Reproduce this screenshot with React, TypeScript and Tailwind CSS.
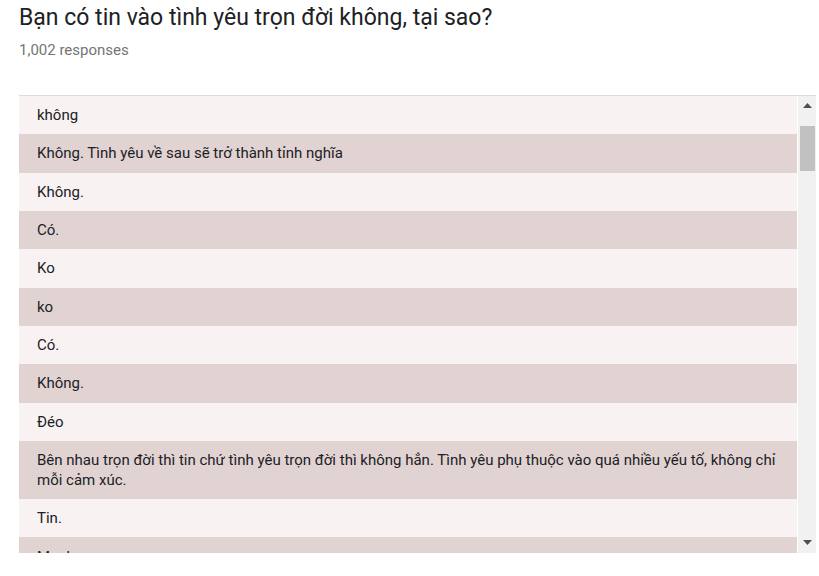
import React from "react";

const rows: string[] = [
  "không",
  "Không. Tình yêu về sau sẽ trở thành tỉnh nghĩa",
  "Không.",
  "Có.",
  "Ko",
  "ko",
  "Có.",
  "Không.",
  "Đéo",
  "Bên nhau trọn đời thì tin chứ tình yêu trọn đời thì không hẳn. Tình yêu phụ thuộc vào quá nhiều yếu tố, không chỉ mỗi cảm xúc.",
  "Tin.",
  "Mạnh",
];

export default function App() {
  return (
    <div
      className="w-[819px] h-[576px] bg-white overflow-hidden"
      style={{ fontFamily: "Roboto, 'Noto Sans', Arial, sans-serif" }}
    >
      <div className="pl-[19px] pt-[4px]">
        <h1 className="text-[23px] leading-[28px] text-[#202124] font-normal">
          Bạn có tin vào tình yêu trọn đời không, tại sao?
        </h1>
        <div className="mt-[8px] text-[15px] leading-[20px] text-[#757575]">
          1,002 responses
        </div>
        <div className="mt-[35px] w-[797px] h-[458px] flex border-t border-[#e0dada]">
          <div className="w-[778px] overflow-hidden">
            {rows.map((r, i) => (
              <div
                key={i}
                className={
                  (i % 2 === 0 ? "bg-[#f8f2f2]" : "bg-[#e2d3d3]") +
                  " pl-[18px] pr-[20px] py-[9.17px] text-[15px] leading-[20px] text-[#202124]"
                }
              >
                {r}
              </div>
            ))}
          </div>
          <div className="ml-[1px] w-[18px] bg-[#f1f1f1] flex flex-col">
            <div className="h-[17px] flex items-center justify-center">
              <svg width="9" height="5" viewBox="0 0 9 5" className="mt-[2px]">
                <polygon points="4.5,0 9,5 0,5" fill="#505050" />
              </svg>
            </div>
            <div className="flex-1 pt-[13px]">
              <div className="ml-[2px] w-[15px] h-[45px] bg-[#c1c1c1]" />
            </div>
            <div className="h-[17px] flex items-center justify-center">
              <svg width="9" height="5" viewBox="0 0 9 5" className="mb-[4px]">
                <polygon points="0,0 9,0 4.5,5" fill="#505050" />
              </svg>
            </div>
          </div>
        </div>
      </div>
    </div>
  );
}
